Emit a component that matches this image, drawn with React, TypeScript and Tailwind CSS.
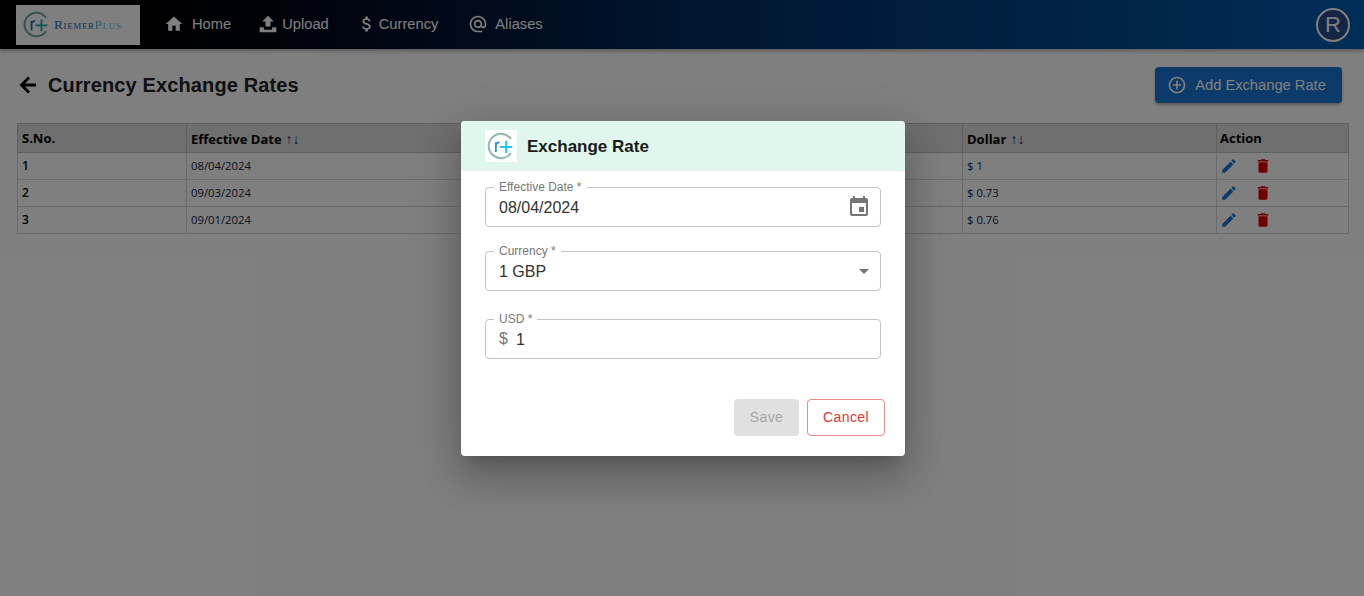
import React from "react";

const rows = [
  { id: 1, date: "08/04/2024", usd: "$ 1" },
  { id: 2, date: "09/03/2024", usd: "$ 0.73" },
  { id: 3, date: "09/01/2024", usd: "$ 0.76" },
];

const Icon = ({ d, className }: { d: string; className?: string }) => (
  <svg viewBox="0 0 24 24" fill="currentColor" className={className}>
    <path d={d} />
  </svg>
);

const icons = {
  home: "M10 20v-6h4v6h5v-8h3L12 3 2 12h3v8z",
  upload: "M9 15h6V9h4l-7-7-7 7h4v6zM2 16h5v1.500c0 .8.7 1.500 1.500 1.500h7c.8 0 1.500-.7 1.500-1.500V16h5v6H2v-6z",
  money:
    "M11.8 10.9c-2.27-.59-3-1.2-3-2.15 0-1.09 1.01-1.85 2.7-1.85 1.78 0 2.44.85 2.5 2.1h2.21c-.07-1.72-1.12-3.3-3.21-3.81V3h-3v2.16c-1.94.42-3.5 1.68-3.5 3.61 0 2.31 1.91 3.46 4.7 4.13 2.5.6 3 1.48 3 2.41 0 .69-.49 1.79-2.7 1.79-2.06 0-2.87-.92-2.98-2.1h-2.2c.12 2.19 1.76 3.42 3.68 3.83V21h3v-2.15c1.95-.37 3.5-1.5 3.5-3.55 0-2.84-2.43-3.81-4.7-4.4z",
  at: "M12 2C6.48 2 2 6.48 2 12s4.48 10 10 10h5v-2h-5c-4.34 0-8-3.66-8-8s3.66-8 8-8 8 3.66 8 8v1.43c0 .79-.71 1.57-1.5 1.57s-1.5-.78-1.5-1.57V12c0-2.76-2.24-5-5-5s-5 2.24-5 5 2.24 5 5 5c1.38 0 2.64-.56 3.54-1.47.65.89 1.77 1.47 2.96 1.47 1.97 0 3.5-1.6 3.5-3.57V12c0-5.52-4.48-10-10-10zm0 13c-1.66 0-3-1.34-3-3s1.34-3 3-3 3 1.34 3 3-1.34 3-3 3z",
  back: "M20 10.500H9l5-5L12 3.500 3.500 12l8.500 8.500 2-2-5-5h11v-3z",
  edit: "M3 17.25V21h3.75L17.81 9.94l-3.75-3.75L3 17.25zM20.71 7.04c.39-.39.39-1.02 0-1.41l-2.34-2.34a.9959.9959 0 0 0-1.41 0l-1.83 1.83 3.75 3.75 1.83-1.83z",
  trash: "M6 19c0 1.1.9 2 2 2h8c1.1 0 2-.9 2-2V7H6v12zM19 4h-3.5l-1-1h-5l-1 1H5v2h14V4z",
  calendar:
    "M17 12h-5v5h5v-5zM16 1v2H8V1H6v2H5c-1.11 0-1.99.9-1.99 2L3 19c0 1.1.89 2 2 2h14c1.1 0 2-.9 2-2V5c0-1.1-.9-2-2-2h-1V1h-2zm3 18H5V8h14v11z",
  add: "M13 7h-2v4H7v2h4v4h2v-4h4v-2h-4V7zm-1-5C6.49 2 2 6.49 2 12s4.49 10 10 10 10-4.49 10-10S17.51 2 12 2zm0 18c-4.41 0-8-3.59-8-8s3.59-8 8-8 8 3.59 8 8-3.59 8-8 8z",
  drop: "M7 10l5 5 5-5z",
};

const LogoMark = ({ className, ring, r, plus }: { className?: string; ring: string; r: string; plus: string }) => (
  <svg viewBox="0 0 32 32" fill="none" className={className}>
    <path d="M26.500 8.500A13 13 0 1 0 26.500 23.500" stroke={ring} strokeWidth="2.200" />
    <path d="M10.500 22.500V12M10.500 16c0-2.700 1.500-4 4-3.800" stroke={r} strokeWidth="2" />
    <path d="M15 17h13M21.500 10.500v13" stroke={plus} strokeWidth="2" />
  </svg>
);

const NavItem = ({ icon, label, className }: { icon: string; label: string; className: string }) => (
  <div className={`flex items-center text-[14.7px] text-white ${className}`}>
    <Icon d={icon} className="size-[20px] shrink-0" />
    <span>{label}</span>
  </div>
);

const Sort = () => <span className="ml-1 text-[14px] font-normal text-[#0d2f78]">↑↓</span>;

const Field = ({ label, children }: { label: string; children: React.ReactNode }) => (
  <div className="relative flex h-10 items-center rounded border border-[#c4c4c4] pl-[13px] pr-[9px] text-base text-[#333333]">
    <span className="absolute -top-[8px] left-[8px] bg-white px-[5px] text-xs leading-[14px] text-[#777777]">{label}</span>
    {children}
  </div>
);

export default function App() {
  return (
    <div className="relative h-[596px] overflow-hidden bg-white font-['Liberation_Sans',sans-serif]">
      <header className="flex h-[49px] items-center bg-gradient-to-r from-black via-[#002a5c] to-[#005cb0] pl-4 pr-[14px] shadow-[0_2px_4px_rgba(0,0,0,0.3)]">
        <div className="flex h-10 w-[124px] items-center gap-[3px] bg-white pl-[6px]">
          <LogoMark className="size-[29px] shrink-0" ring="#6fa8a4" r="#1f77b8" plus="#18a7b8" />
          <span className="whitespace-nowrap font-['Liberation_Serif',serif] text-[13.5px] leading-none tracking-[0.6px] [font-variant:small-caps]">
            <span className="text-[#1c6aa8]">Riemer</span>
            <span className="text-[#5cc0d0]">Plus</span>
          </span>
        </div>
        <NavItem icon={icons.home} label="Home" className="ml-[24px] gap-[8px]" />
        <NavItem icon={icons.upload} label="Upload" className="ml-[27px] gap-[4px]" />
        <NavItem icon={icons.money} label="Currency" className="ml-[28px] gap-[2px]" />
        <NavItem icon={icons.at} label="Aliases" className="ml-[30px] gap-[7px]" />
        <div className="ml-auto flex size-[34px] items-center justify-center rounded-full border-2 border-white bg-[#2a4a8c] text-[22px] text-white">
          R
        </div>
      </header>

      <main className="px-[17px] pr-[15px]">
        <div className="flex h-[74px] items-center justify-between pb-[2px] pl-[1px] pr-[7px]">
          <div className="flex items-center gap-[6px]">
            <Icon d={icons.back} className="size-6 -translate-x-[2px] text-black" />
            <h1 className="text-xl font-bold tracking-[0.13px] text-[#222222]">Currency Exchange Rates</h1>
          </div>
          <button className="flex h-9 w-[187px] items-center justify-center gap-2 rounded bg-[#1976d2] pr-1 text-[14.7px] text-white shadow-[0_2px_3px_rgba(0,0,0,0.3)]">
            <Icon d={icons.add} className="size-5" />
            Add Exchange Rate
          </button>
        </div>

        <table className="w-full table-fixed border-collapse font-['Open_Sans',sans-serif] text-[11.3px] text-[#101a3a]">
          <colgroup>
            <col className="w-[169px]" />
            <col className="w-[388px]" />
            <col className="w-[388px]" />
            <col className="w-[254px]" />
            <col />
          </colgroup>
          <thead>
            <tr className="h-[29px] bg-[#dedede] text-left text-[13px] font-bold text-black">
              <th className="border border-[#c0c0c0] px-1 pt-[1px]">S.No.</th>
              <th className="border border-[#c0c0c0] px-1 pt-[1px]">
                Effective Date
                <Sort />
              </th>
              <th className="border border-[#c0c0c0] px-1" />
              <th className="border border-[#c0c0c0] px-1 pt-[1px]">
                Dollar
                <Sort />
              </th>
              <th className="border border-[#c0c0c0] px-[3px] pt-[1px]">Action</th>
            </tr>
          </thead>
          <tbody>
            {rows.map((row) => (
              <tr key={row.id} className="h-[27px]">
                <td className="border border-[#d6d6d6] px-1 text-xs font-semibold text-black">{row.id}</td>
                <td className="border border-[#d6d6d6] px-1">{row.date}</td>
                <td className="border border-[#d6d6d6] px-1" />
                <td className="border border-[#d6d6d6] px-1">{row.usd}</td>
                <td className="border border-[#d6d6d6] px-[3px]">
                  <div className="flex items-center gap-[16px]">
                    <Icon d={icons.edit} className="size-[18px] text-[#1976d2]" />
                    <Icon d={icons.trash} className="size-[18px] text-[#e00000]" />
                  </div>
                </td>
              </tr>
            ))}
          </tbody>
        </table>
      </main>

      <div className="absolute inset-0 flex justify-center bg-black/50 pl-[2px] pt-[121px]">
        <div className="h-[335px] w-[444px] overflow-hidden rounded bg-white shadow-[0_11px_15px_-7px_rgba(0,0,0,0.2),0_24px_38px_3px_rgba(0,0,0,0.14),0_9px_46px_8px_rgba(0,0,0,0.12)]">
          <div className="flex h-[50px] items-center gap-[10px] bg-[#dff7ec] pl-6">
            <div className="flex size-8 items-center justify-center bg-white">
              <LogoMark className="size-[30px]" ring="#93b8b4" r="#2a8fe0" plus="#20c8e8" />
            </div>
            <h2 className="pt-[1px] text-[17px] font-bold text-[#1a1a1a]">Exchange Rate</h2>
          </div>

          <div className="flex flex-col gap-6 px-6 pt-4">
            <Field label="Effective Date *">
              <span className="pt-[1px]">08/04/2024</span>
              <Icon d={icons.calendar} className="ml-auto size-6 text-[#757575]" />
            </Field>
            <Field label="Currency *">
              <span className="pt-[1px]">1 GBP</span>
              <Icon d={icons.drop} className="ml-auto -mr-[5px] size-6 text-[#757575]" />
            </Field>
            <div className="mt-1">
              <Field label="USD *">
                <span className="mr-2 text-[#757575]">$</span>
                <span className="pt-[1px]">1</span>
              </Field>
            </div>
          </div>

          <div className="mt-10 flex justify-end gap-2 pr-5">
            <button className="h-[37px] w-[65px] rounded bg-[#e0e0e0] pb-[2px] text-sm tracking-[0.4px] text-[#a6a6a6]">Save</button>
            <button className="h-[37px] w-[78px] rounded border border-[#ef8a8a] pb-[2px] text-sm tracking-[0.4px] text-[#e03535]">Cancel</button>
          </div>
        </div>
      </div>
    </div>
  );
}
